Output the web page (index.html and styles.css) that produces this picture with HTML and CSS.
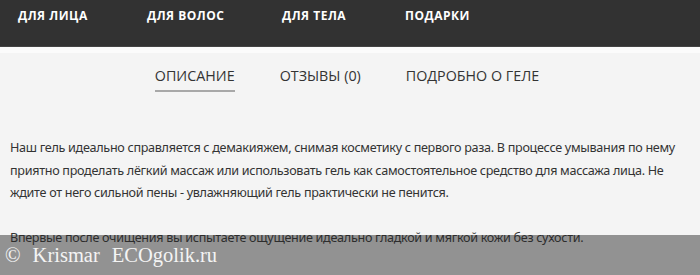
FILE: index.html
```html
<!DOCTYPE html>
<html lang="ru">
<head>
  <meta charset="UTF-8">
  <meta name="viewport" content="width=device-width, initial-scale=1.0">
  <title>Гель для умывания</title>
  <link rel="stylesheet" href="styles.css">
</head>
<body>
  <nav class="top-nav">
    <a href="#" class="nav-link">Для лица</a>
    <a href="#" class="nav-link">Для волос</a>
    <a href="#" class="nav-link">Для тела</a>
    <a href="#" class="nav-link">Подарки</a>
  </nav>

  <main class="product">
    <div class="tabs">
      <a href="#" class="tab active">Описание</a>
      <a href="#" class="tab">Отзывы (0)</a>
      <a href="#" class="tab">Подробно о геле</a>
    </div>

    <div class="tab-content">
      <p>Наш гель идеально справляется с демакияжем, снимая косметику с первого раза. В процессе умывания по нему приятно проделать лёгкий массаж или использовать гель как самостоятельное средство для массажа лица. Не ждите от него сильной пены - увлажняющий гель практически не пенится.</p>
      <p>Впервые после очищения вы испытаете ощущение идеально гладкой и мягкой кожи без сухости.</p>
    </div>
  </main>

  <div class="watermark">
    <span>©</span>
    <span>Krismar</span>
    <span>ECOgolik.ru</span>
  </div>
</body>
</html>
```

FILE: styles.css
```css
:root {
  --nav-bg: #323232;
  --page-bg: #f4f4f4;
  --text-color: #333;
  --tab-line: #a8a8a8;
}

body {
  margin: 0;
  background: var(--page-bg);
  color: var(--text-color);
  font-family: 'Open Sans', 'Noto Sans', sans-serif;
  height: 275px;
  overflow: hidden;
  position: relative;
}

.top-nav {
  display: flex;
  height: 46px;
  padding-left: 18px;
  background: var(--nav-bg);
  border-bottom: 1px solid #444;
}

.nav-link {
  color: #fff;
  text-decoration: none;
  text-transform: uppercase;
  font-weight: 700;
  font-size: 12px;
  letter-spacing: 0.5px;
  line-height: 16px;
  padding-top: 8px;
}

.nav-link:nth-child(1) { width: 129px; }
.nav-link:nth-child(2) { width: 135px; }
.nav-link:nth-child(3) { width: 123px; }

.product {
  border-top: 6px solid #fbfbfb;
}

.tabs {
  display: flex;
  justify-content: center;
  gap: 45px;
  padding-top: 14px;
  padding-right: 6px;
}

.tab {
  color: var(--text-color);
  text-decoration: none;
  text-transform: uppercase;
  font-size: 14.3px;
  line-height: 18px;
  padding-bottom: 5px;
  border-bottom: 2px solid transparent;
}

.tab.active {
  border-bottom-color: var(--tab-line);
}

.tab-content {
  padding: 45px 10px 0 10px;
  font-family: 'Noto Sans', 'Open Sans', sans-serif;
  font-size: 12.6px;
  letter-spacing: -0.3px;
  line-height: 22.5px;
}

.tab-content p {
  margin: 0 0 22px;
}

/* semi-transparent photo credit strip over the bottom */
.watermark {
  position: absolute;
  left: 0;
  right: 0;
  top: 235px;
  bottom: 0;
  display: flex;
  gap: 12px;
  background: rgba(40, 40, 40, 0.48);
  color: #f4f4f4;
  font-family: 'Liberation Serif', serif;
  font-size: 20.5px;
  line-height: 24px;
  padding: 8px 0 0 5px;
}
```
